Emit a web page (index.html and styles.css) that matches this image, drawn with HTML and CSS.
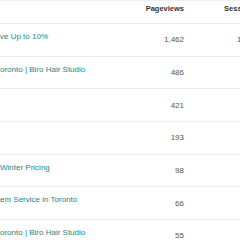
FILE: index.html
```html
<!DOCTYPE html>
<html>
<head>
<meta charset="utf-8">
<link rel="stylesheet" href="styles.css">
</head>
<body>
<div class="table">
  <div class="row head">
    <div class="cell page"></div>
    <div class="cell num">Pageviews</div>
    <div class="cell num">Sessions</div>
  </div>
  <div class="row">
    <div class="cell page"><a class="link">ve Up to 10%</a></div>
    <div class="cell num">1,462</div>
    <div class="cell num">1,208</div>
  </div>
  <div class="row">
    <div class="cell page"><a class="link">oronto | Biro Hair Studio</a></div>
    <div class="cell num">486</div>
    <div class="cell num">402</div>
  </div>
  <div class="row">
    <div class="cell page"><a class="link"></a></div>
    <div class="cell num">421</div>
    <div class="cell num">377</div>
  </div>
  <div class="row">
    <div class="cell page"><a class="link"></a></div>
    <div class="cell num">193</div>
    <div class="cell num">168</div>
  </div>
  <div class="row">
    <div class="cell page"><a class="link">Winter Pricing</a></div>
    <div class="cell num">98</div>
    <div class="cell num">87</div>
  </div>
  <div class="row">
    <div class="cell page"><a class="link">em Service in Toronto</a></div>
    <div class="cell num">66</div>
    <div class="cell num">59</div>
  </div>
  <div class="row">
    <div class="cell page"><a class="link">oronto | Biro Hair Studio</a></div>
    <div class="cell num">55</div>
    <div class="cell num">49</div>
  </div>
</div>
</body>
</html>
```

FILE: styles.css
```css
html, body {
  margin: 0;
  padding: 0;
  background: #ffffff;
  overflow: hidden;
  width: 240px;
  height: 240px;
}
body {
  font-family: "Liberation Sans", Arial, sans-serif;
  font-size: 8px;
  color: #555555;
}
.table {
  width: 270px;
  border-top: 1px solid #f0f0f0;
}
.row {
  display: grid;
  grid-template-columns: 130px 54px 73px;
  height: 32.667px;
  box-sizing: border-box;
  border-bottom: 1px solid #ededed;
}
.row.head {
  height: 23px;
  border-bottom: 1px solid #ededed;
}
.head .cell {
  font-weight: bold;
  font-size: 7.5px;
  color: #333333;
  align-self: start;
  padding-top: 2px;
}
.cell {
  line-height: 11px;
  white-space: nowrap;
}
.page {
  align-self: start;
  padding-top: 7px;
}
.num {
  text-align: right;
  align-self: center;
}
.link {
  color: #1f8582;
  text-decoration: none;
}
```
